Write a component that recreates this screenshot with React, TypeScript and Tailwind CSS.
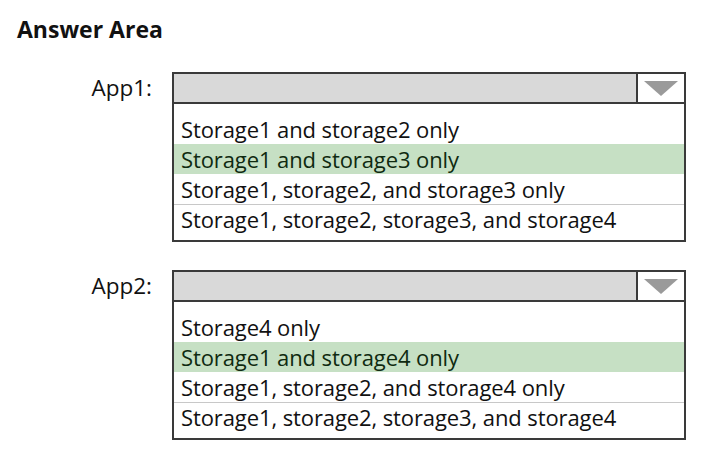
import React from "react";

type Opt = { text: string; selected?: boolean };

const app1: Opt[] = [
  { text: "Storage1 and storage2 only" },
  { text: "Storage1 and storage3 only", selected: true },
  { text: "Storage1, storage2, and storage3 only" },
  { text: "Storage1, storage2, storage3, and storage4" },
];

const app2: Opt[] = [
  { text: "Storage4 only" },
  { text: "Storage1 and storage4 only", selected: true },
  { text: "Storage1, storage2, and storage4 only" },
  { text: "Storage1, storage2, storage3, and storage4" },
];

function Dropdown({ label, options }: { label: string; options: Opt[] }) {
  return (
    <div className="flex items-start">
      <div className="w-[135px] h-[32px] flex items-center justify-end text-[22.5px] text-[#111]">
        {label}
      </div>
      <div className="ml-[20px] w-[514px] border-2 border-[#3a3a3a] bg-white">
        <div className="flex h-[30px] border-b-2 border-[#3a3a3a]">
          <div className="flex-1 bg-[#d9d9d9]" />
          <div className="w-[48px] border-l-2 border-[#3a3a3a] bg-white flex items-center justify-center">
            <svg width="34" height="15" viewBox="0 0 34 15">
              <polygon points="0,0 34,0 17,15" fill="#9a9a9a" />
            </svg>
          </div>
        </div>
        <div className="pt-[10px] pb-[6px]">
          {options.map((o, i) => (
            <div
              key={i}
              className={
                "h-[30px] flex items-center pl-[7px] text-[22px] tracking-[-0.1px] " +
                (o.selected ? "bg-[#c6e0c4] text-[#0f2a10] " : "text-[#111] ") +
                (i === 3 ? "border-t border-[#c8c8c8]" : "")
              }
            >
              {o.text}
            </div>
          ))}
        </div>
      </div>
    </div>
  );
}

export default function App() {
  return (
    <div
      className="w-[705px] h-[459px] bg-white pl-[17px] pt-[15px]"
      style={{ fontFamily: "'Open Sans', 'Noto Sans', sans-serif" }}
    >
      <div className="h-[28px] flex items-center text-[23px] font-bold text-[#111]">Answer Area</div>
      <div className="mt-[29px] flex flex-col gap-[28px]">
        <Dropdown label="App1:" options={app1} />
        <Dropdown label="App2:" options={app2} />
      </div>
    </div>
  );
}
